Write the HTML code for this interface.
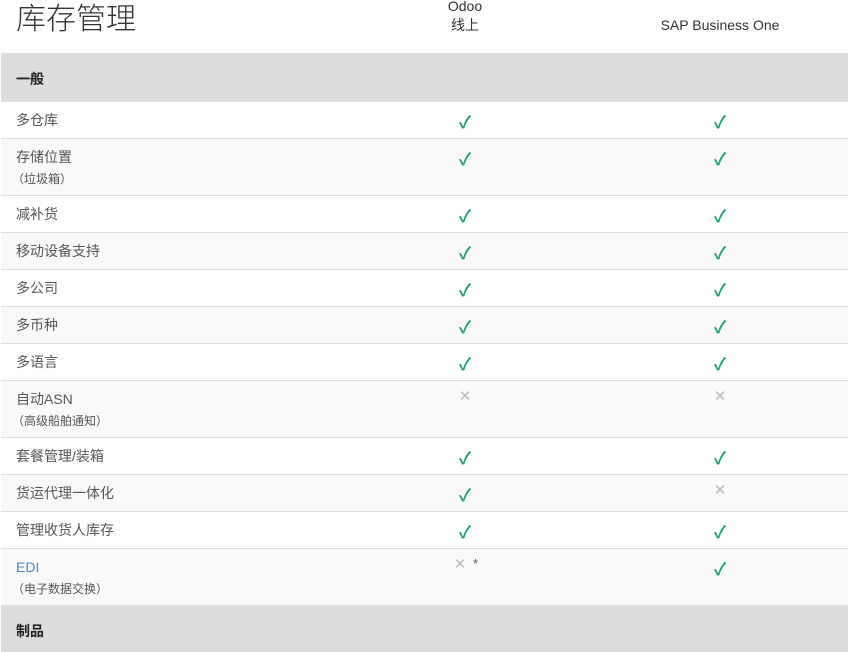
<!DOCTYPE html>
<html><head><meta charset="utf-8"><style>
*{margin:0;padding:0;box-sizing:border-box}
body{width:851px;height:652px;overflow:hidden;background:#fff;font-family:"Liberation Sans","Noto Sans CJK SC",sans-serif;color:#555;position:relative}
.t{position:absolute;left:16px;top:2px;font-size:30px;color:#333;font-weight:300;line-height:36px}
.h{position:absolute;font-size:14px;color:#333;text-align:center;line-height:19px}
.r{position:absolute;left:1px;width:847px;border-top:1px solid #ddd}
.sec{background:#dcdddf;border-top:none}
.sec b{position:absolute;left:15px;top:16px;font-size:14px;color:#222}
.l{position:absolute;left:15px;top:9px;font-size:14px;line-height:18px}
.s{display:block;font-size:12px;margin-left:-4px;margin-top:4px}
.c{position:absolute;top:6px;font-size:17px;color:#1fa173;font-weight:bold;width:20px;text-align:center}
.x{color:#bbb;font-weight:normal;font-size:15px}
.o{left:454px}.p{left:709px}
</style></head><body>
<div class="t">库存管理</div>
<div class="h" style="left:425px;width:80px;top:-3px">Odoo<br>线上</div>
<div class="h" style="left:640px;width:160px;top:16px">SAP Business One</div>

<div class="r sec" style="top:53px;height:49px"><b>一般</b></div>
<div class="r" style="top:102px;height:36px;background:#fff;border-top:none"><span class="l">多仓库</span><span class="c o">✓</span><span class="c p">✓</span></div>
<div class="r" style="top:138px;height:57px;background:#f9f9f9"><span class="l">存储位置<span class="s">（垃圾箱）</span></span><span class="c o">✓</span><span class="c p">✓</span></div>
<div class="r" style="top:195px;height:37px;background:#fff"><span class="l">减补货</span><span class="c o">✓</span><span class="c p">✓</span></div>
<div class="r" style="top:232px;height:37px;background:#f9f9f9"><span class="l">移动设备支持</span><span class="c o">✓</span><span class="c p">✓</span></div>
<div class="r" style="top:269px;height:37px;background:#fff"><span class="l">多公司</span><span class="c o">✓</span><span class="c p">✓</span></div>
<div class="r" style="top:306px;height:37px;background:#f9f9f9"><span class="l">多币种</span><span class="c o">✓</span><span class="c p">✓</span></div>
<div class="r" style="top:343px;height:37px;background:#fff"><span class="l">多语言</span><span class="c o">✓</span><span class="c p">✓</span></div>
<div class="r" style="top:380px;height:57px;background:#f9f9f9"><span class="l">自动ASN<span class="s">（高级船舶通知）</span></span><span class="c o x">✕</span><span class="c p x">✕</span></div>
<div class="r" style="top:437px;height:37px;background:#fff"><span class="l">套餐管理/装箱</span><span class="c o">✓</span><span class="c p">✓</span></div>
<div class="r" style="top:474px;height:37px;background:#f9f9f9"><span class="l">货运代理一体化</span><span class="c o">✓</span><span class="c p x">✕</span></div>
<div class="r" style="top:511px;height:37px;background:#fff"><span class="l">管理收货人库存</span><span class="c o">✓</span><span class="c p">✓</span></div>
<div class="r" style="top:548px;height:57px;background:#f9f9f9"><span class="l"><span style="color:#4a86c5">EDI</span><span class="s">（电子数据交换）</span></span><span class="c x" style="left:449px">✕</span><span style="position:absolute;left:472px;top:7px;font-size:13px;color:#555">*</span><span class="c p">✓</span></div>
<div class="r sec" style="top:605px;height:47px"><b>制品</b></div>
</body></html>
